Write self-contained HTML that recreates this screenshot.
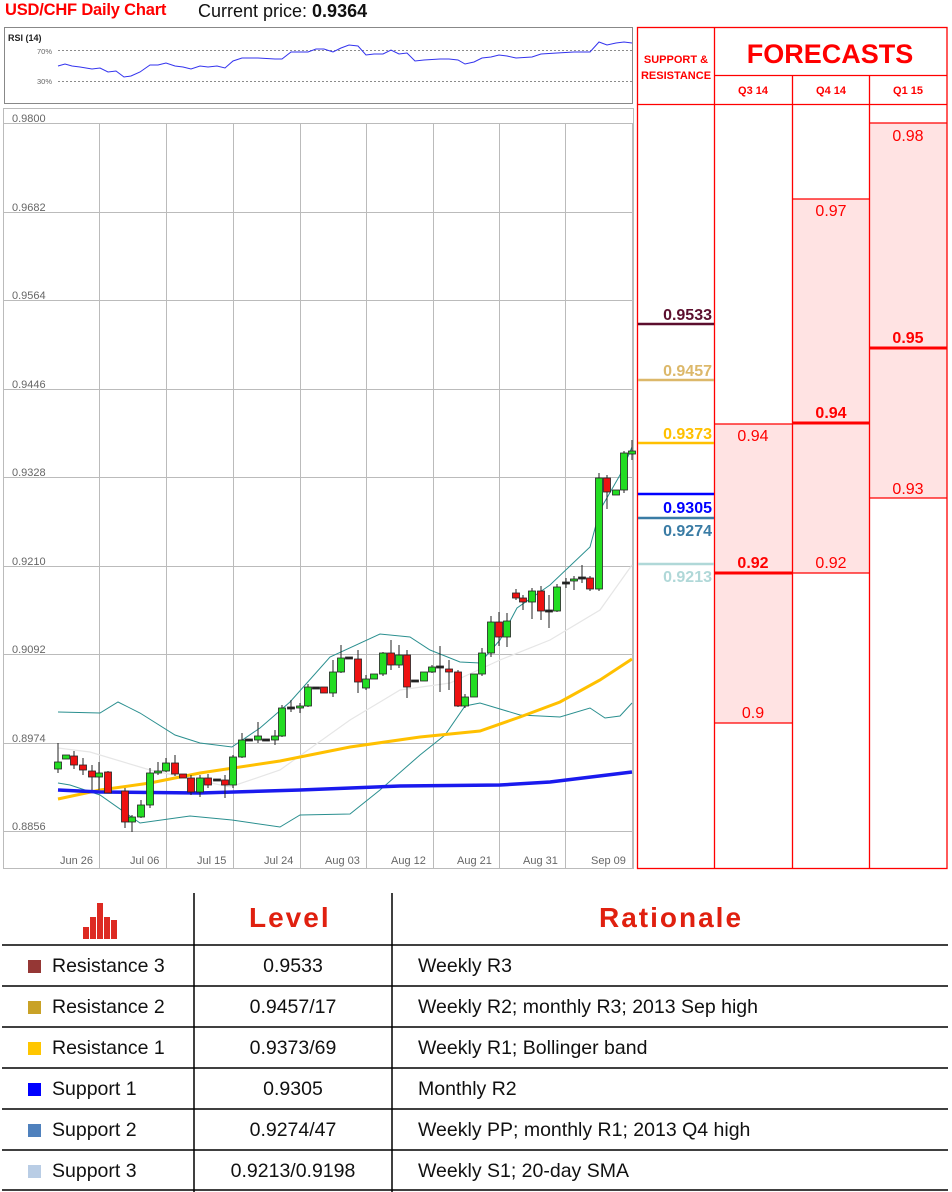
<!DOCTYPE html>
<html><head><meta charset="utf-8"><style>
*{margin:0;padding:0;box-sizing:border-box}
body{width:952px;height:1192px;background:#fff;position:relative;overflow:hidden;font-family:"Liberation Sans",sans-serif}
.a{position:absolute;white-space:nowrap}
.t{font-size:19.5px;color:#111}
.h{font-family:"Liberation Sans",sans-serif;font-weight:900;color:#e0200f;font-size:28px;letter-spacing:2px}
</style></head><body>
<div class="a" style="left:5px;top:1px;font-size:16.5px;font-weight:bold;color:#f00;letter-spacing:-0.2px">USD/CHF Daily Chart</div>
<div class="a" style="left:198px;top:1px;font-size:18px;color:#111">Current price: <b>0.9364</b></div>

<svg class="a" style="left:0;top:0" width="952" height="880" xmlns="http://www.w3.org/2000/svg">
<rect x="4.5" y="27.5" width="628" height="76" fill="#fff" stroke="#888"/>
<text x="8" y="41" font-size="9" font-weight="bold" font-family="Liberation Sans" fill="#222">RSI (14)</text>
<text x="37" y="54" font-size="7.5" font-family="Liberation Sans" fill="#666">70%</text>
<text x="37" y="84" font-size="7.5" font-family="Liberation Sans" fill="#666">30%</text>
<line x1="58" y1="50.5" x2="632" y2="50.5" stroke="#666" stroke-dasharray="2,2" stroke-width="0.8"/>
<line x1="58" y1="81.5" x2="632" y2="81.5" stroke="#666" stroke-dasharray="2,2" stroke-width="0.8"/>
<polyline fill="none" stroke="#3333ee" stroke-width="1" points="58,66 65,64 72,66 80,67 92,69 100,68 108,72 116,71 124,77 131,76 140,72 150,65 158,65 166,63 175,66 183,67 191,69 200,66 208,67 217,66 225,68 233,61 242,58 258,58 275,59 282,59 291,52 300,52 308,52 316,49 324,49 333,52 341,48 349,45 358,46 366,55 374,54 383,54 391,50 399,54 407,53 415,61 424,60 440,59 449,59 458,60 465,64 474,62 482,58 491,57 499,55 507,56 516,58 532,57 541,54 557,53 574,52 590,52 599,42 607,45 616,43 624,42 632,43"/>
<rect x="3.5" y="108.5" width="630" height="760" fill="#fff" stroke="#bbb"/>
<g stroke="#bbb" stroke-width="1">
<line x1="4" y1="123.5" x2="633" y2="123.5"/><line x1="4" y1="212.5" x2="633" y2="212.5"/><line x1="4" y1="300.5" x2="633" y2="300.5"/><line x1="4" y1="389.5" x2="633" y2="389.5"/><line x1="4" y1="477.5" x2="633" y2="477.5"/><line x1="4" y1="566.5" x2="633" y2="566.5"/><line x1="4" y1="654.5" x2="633" y2="654.5"/><line x1="4" y1="743.5" x2="633" y2="743.5"/><line x1="4" y1="831.5" x2="633" y2="831.5"/>
<line x1="99.5" y1="124" x2="99.5" y2="868"/><line x1="166.5" y1="124" x2="166.5" y2="868"/><line x1="233.5" y1="124" x2="233.5" y2="868"/><line x1="300.5" y1="124" x2="300.5" y2="868"/><line x1="366.5" y1="124" x2="366.5" y2="868"/><line x1="433.5" y1="124" x2="433.5" y2="868"/><line x1="499.5" y1="124" x2="499.5" y2="868"/><line x1="565.5" y1="124" x2="565.5" y2="868"/><line x1="632.5" y1="124" x2="632.5" y2="868"/>
</g>
<g font-family="Liberation Sans" font-size="11" fill="#666">
<text x="12" y="122">0.9800</text><text x="12" y="211">0.9682</text><text x="12" y="299">0.9564</text><text x="12" y="388">0.9446</text><text x="12" y="476">0.9328</text><text x="12" y="565">0.9210</text><text x="12" y="653">0.9092</text><text x="12" y="742">0.8974</text><text x="12" y="830">0.8856</text>
<text x="60" y="864">Jun 26</text><text x="130" y="864">Jul 06</text><text x="197" y="864">Jul 15</text><text x="264" y="864">Jul 24</text><text x="325" y="864">Aug 03</text><text x="391" y="864">Aug 12</text><text x="457" y="864">Aug 21</text><text x="523" y="864">Aug 31</text><text x="591" y="864">Sep 09</text>
</g>
<polyline fill="none" stroke="#e6e6e6" stroke-width="1.2" points="58,748 90,752 150,770 230,787 280,770 350,720 400,690 450,683 500,660 550,640 600,610 632,565"/>
<polyline fill="none" stroke="#2a8f8f" stroke-width="1" points="58,712 100,713 118,702 140,713 175,735 200,743 232,747 260,728 290,702 330,657 380,634 410,637 430,650 460,662 480,663 500,640 517,608 550,585 590,547 600,510 620,475 632,447"/>
<polyline fill="none" stroke="#2a8f8f" stroke-width="1" points="58,783 70,785 100,795 140,823 190,816 232,820 280,827 300,815 350,814 380,790 420,755 445,735 465,706 480,703 520,715 560,717 590,708 605,718 620,716 632,703"/>
<polyline fill="none" stroke="#ffc000" stroke-width="3" points="58,799 100,790 150,783 200,773 280,761 350,747 420,737 480,731 520,717 560,702 600,680 632,659"/>
<polyline fill="none" stroke="#1a1aee" stroke-width="3.5" points="58,790 100,792 200,793 300,790 400,786 500,785 550,782 632,772"/>
<g stroke="#222" stroke-width="1">
<line x1="58" y1="743" x2="58" y2="773"/><line x1="74" y1="751" x2="74" y2="769"/><line x1="83" y1="758" x2="83" y2="775"/><line x1="92" y1="765" x2="92" y2="790"/><line x1="99" y1="762" x2="99" y2="790"/><line x1="108" y1="771" x2="108" y2="793"/><line x1="125" y1="788" x2="125" y2="828"/><line x1="132" y1="815" x2="132" y2="832"/><line x1="141" y1="800" x2="141" y2="818"/><line x1="150" y1="768" x2="150" y2="808"/><line x1="158" y1="762" x2="158" y2="775"/><line x1="166" y1="758" x2="166" y2="772"/><line x1="175" y1="755" x2="175" y2="776"/><line x1="191" y1="775" x2="191" y2="795"/><line x1="200" y1="775" x2="200" y2="797"/><line x1="208" y1="774" x2="208" y2="788"/><line x1="225" y1="775" x2="225" y2="798"/><line x1="233" y1="755" x2="233" y2="788"/><line x1="242" y1="733" x2="242" y2="758"/><line x1="258" y1="722" x2="258" y2="743"/><line x1="275" y1="730" x2="275" y2="745"/><line x1="282" y1="705" x2="282" y2="737"/><line x1="291" y1="700" x2="291" y2="712"/><line x1="300" y1="703" x2="300" y2="713"/><line x1="308" y1="684" x2="308" y2="707"/><line x1="333" y1="660" x2="333" y2="697"/><line x1="341" y1="645" x2="341" y2="673"/><line x1="358" y1="650" x2="358" y2="693"/><line x1="366" y1="675" x2="366" y2="690"/><line x1="383" y1="652" x2="383" y2="676"/><line x1="391" y1="640" x2="391" y2="670"/><line x1="399" y1="645" x2="399" y2="668"/><line x1="407" y1="650" x2="407" y2="698"/><line x1="432" y1="665" x2="432" y2="673"/><line x1="440" y1="646" x2="440" y2="692"/><line x1="449" y1="660" x2="449" y2="690"/><line x1="458" y1="670" x2="458" y2="707"/><line x1="465" y1="694" x2="465" y2="708"/><line x1="482" y1="648" x2="482" y2="676"/><line x1="491" y1="616" x2="491" y2="657"/><line x1="499" y1="612" x2="499" y2="646"/><line x1="507" y1="613" x2="507" y2="647"/><line x1="516" y1="589" x2="516" y2="600"/><line x1="523" y1="595" x2="523" y2="610"/><line x1="532" y1="588" x2="532" y2="619"/><line x1="541" y1="586" x2="541" y2="620"/><line x1="549" y1="595" x2="549" y2="628"/><line x1="557" y1="584" x2="557" y2="612"/><line x1="566" y1="578" x2="566" y2="588"/><line x1="574" y1="576" x2="574" y2="590"/><line x1="582" y1="565" x2="582" y2="583"/><line x1="590" y1="576" x2="590" y2="591"/><line x1="599" y1="473" x2="599" y2="591"/><line x1="607" y1="475" x2="607" y2="509"/><line x1="624" y1="451" x2="624" y2="493"/><line x1="632" y1="440" x2="632" y2="460"/>
</g>
<g stroke="#222" stroke-width="0.8">
<rect x="54.5" y="762" width="7" height="7" fill="#22dd22"/><rect x="62.5" y="755" width="7" height="4" fill="#22dd22"/><rect x="70.5" y="756" width="7" height="9" fill="#ee1111"/><rect x="79.5" y="765" width="7" height="5" fill="#ee1111"/><rect x="88.5" y="771" width="7" height="6" fill="#ee1111"/><rect x="95.5" y="773" width="7" height="4" fill="#22dd22"/><rect x="104.5" y="772" width="7" height="21" fill="#ee1111"/><rect x="121.5" y="791" width="7" height="31" fill="#ee1111"/><rect x="128.5" y="817" width="7" height="5" fill="#22dd22"/><rect x="137.5" y="805" width="7" height="12" fill="#22dd22"/><rect x="146.5" y="773" width="7" height="32" fill="#22dd22"/><rect x="154.5" y="771" width="7" height="2" fill="#22dd22"/><rect x="162.5" y="763" width="7" height="8" fill="#22dd22"/><rect x="171.5" y="763" width="7" height="11" fill="#ee1111"/><rect x="179.5" y="774" width="7" height="4" fill="#ee1111"/><rect x="187.5" y="778" width="7" height="14" fill="#ee1111"/><rect x="196.5" y="778" width="7" height="14" fill="#22dd22"/><rect x="204.5" y="778" width="7" height="7" fill="#ee1111"/><rect x="213.5" y="779" width="7" height="2" fill="#222"/><rect x="221.5" y="780" width="7" height="5" fill="#ee1111"/><rect x="229.5" y="757" width="7" height="28" fill="#22dd22"/><rect x="238.5" y="740" width="7" height="17" fill="#22dd22"/><rect x="245.5" y="739" width="7" height="2" fill="#222"/><rect x="254.5" y="736" width="7" height="4" fill="#22dd22"/><rect x="262.5" y="739" width="7" height="2" fill="#222"/><rect x="271.5" y="736" width="7" height="4" fill="#22dd22"/><rect x="278.5" y="708" width="7" height="28" fill="#22dd22"/><rect x="287.5" y="707" width="7" height="2" fill="#222"/><rect x="296.5" y="706" width="7" height="2" fill="#22dd22"/><rect x="304.5" y="687" width="7" height="19" fill="#22dd22"/><rect x="312.5" y="687" width="7" height="2" fill="#222"/><rect x="320.5" y="687" width="7" height="6" fill="#ee1111"/><rect x="329.5" y="672" width="7" height="21" fill="#22dd22"/><rect x="337.5" y="658" width="7" height="14" fill="#22dd22"/><rect x="345.5" y="657" width="7" height="2" fill="#222"/><rect x="354.5" y="659" width="7" height="23" fill="#ee1111"/><rect x="362.5" y="679" width="7" height="9" fill="#22dd22"/><rect x="370.5" y="674" width="7" height="5" fill="#22dd22"/><rect x="379.5" y="653" width="7" height="21" fill="#22dd22"/><rect x="387.5" y="653" width="7" height="12" fill="#ee1111"/><rect x="395.5" y="655" width="7" height="10" fill="#22dd22"/><rect x="403.5" y="655" width="7" height="32" fill="#ee1111"/><rect x="411.5" y="680" width="7" height="2" fill="#222"/><rect x="420.5" y="672" width="7" height="9" fill="#22dd22"/><rect x="428.5" y="667" width="7" height="5" fill="#22dd22"/><rect x="436.5" y="666" width="7" height="2" fill="#222"/><rect x="445.5" y="669" width="7" height="3" fill="#ee1111"/><rect x="454.5" y="672" width="7" height="34" fill="#ee1111"/><rect x="461.5" y="697" width="7" height="9" fill="#22dd22"/><rect x="470.5" y="674" width="7" height="23" fill="#22dd22"/><rect x="478.5" y="653" width="7" height="21" fill="#22dd22"/><rect x="487.5" y="622" width="7" height="31" fill="#22dd22"/><rect x="495.5" y="622" width="7" height="15" fill="#ee1111"/><rect x="503.5" y="621" width="7" height="16" fill="#22dd22"/><rect x="512.5" y="593" width="7" height="5" fill="#ee1111"/><rect x="519.5" y="598" width="7" height="4" fill="#ee1111"/><rect x="528.5" y="591" width="7" height="11" fill="#22dd22"/><rect x="537.5" y="591" width="7" height="20" fill="#ee1111"/><rect x="545.5" y="610" width="7" height="2" fill="#222"/><rect x="553.5" y="587" width="7" height="24" fill="#22dd22"/><rect x="562.5" y="582" width="7" height="2" fill="#222"/><rect x="570.5" y="579" width="7" height="2" fill="#22dd22"/><rect x="578.5" y="577" width="7" height="2" fill="#222"/><rect x="586.5" y="578" width="7" height="11" fill="#ee1111"/><rect x="595.5" y="478" width="7" height="111" fill="#22dd22"/><rect x="603.5" y="478" width="7" height="14" fill="#ee1111"/><rect x="612.5" y="490" width="7" height="5" fill="#22dd22"/><rect x="620.5" y="453" width="7" height="37" fill="#22dd22"/><rect x="628.5" y="451" width="7" height="3" fill="#22dd22"/>
</g>
<g>
<rect x="714" y="424" width="78" height="299" fill="#ffe3e3"/>
<rect x="792" y="199" width="77" height="374" fill="#ffe3e3"/>
<rect x="869" y="123" width="78" height="375" fill="#ffe3e3"/>
</g>
<g stroke="#f00" stroke-width="1.3" fill="none">
<rect x="637.5" y="27.5" width="309.5" height="841"/>
<line x1="714.5" y1="27" x2="714.5" y2="868"/>
<line x1="792.5" y1="75" x2="792.5" y2="868"/>
<line x1="869.5" y1="75" x2="869.5" y2="868"/>
<line x1="714" y1="75.5" x2="947" y2="75.5"/>
<line x1="637" y1="104.5" x2="947" y2="104.5"/>
<line x1="714" y1="424" x2="792" y2="424"/><line x1="714" y1="723" x2="792" y2="723"/>
<line x1="792" y1="199" x2="869" y2="199"/><line x1="792" y1="573" x2="869" y2="573"/>
<line x1="869" y1="123" x2="947" y2="123"/><line x1="869" y1="498" x2="947" y2="498"/>
</g>
<g stroke="#f00" stroke-width="3">
<line x1="714" y1="573" x2="792" y2="573"/><line x1="792" y1="423" x2="869" y2="423"/><line x1="869" y1="348" x2="947" y2="348"/>
</g>
<g font-family="Liberation Sans" fill="#f00" text-anchor="middle">
<text x="830" y="63" font-size="27" font-weight="bold">FORECASTS</text>
<text x="676" y="63" font-size="11" font-weight="bold">SUPPORT &amp;</text>
<text x="676" y="79" font-size="11" font-weight="bold">RESISTANCE</text>
<text x="753" y="94" font-size="11" font-weight="bold">Q3 14</text>
<text x="831" y="94" font-size="11" font-weight="bold">Q4 14</text>
<text x="908" y="94" font-size="11" font-weight="bold">Q1 15</text>
<g font-size="16">
<text x="753" y="441">0.94</text><text x="753" y="568" font-weight="bold">0.92</text><text x="753" y="718">0.9</text>
<text x="831" y="216">0.97</text><text x="831" y="418" font-weight="bold">0.94</text><text x="831" y="568">0.92</text>
<text x="908" y="141">0.98</text><text x="908" y="343" font-weight="bold">0.95</text><text x="908" y="494">0.93</text>
</g>
</g>
<g stroke-width="2.5">
<line x1="638" y1="324" x2="714" y2="324" stroke="#5c0f2e"/>
<line x1="638" y1="380" x2="714" y2="380" stroke="#dcb86a"/>
<line x1="638" y1="443" x2="714" y2="443" stroke="#ffc000"/>
<line x1="638" y1="494" x2="714" y2="494" stroke="#0000ff"/>
<line x1="638" y1="518" x2="714" y2="518" stroke="#3a7ca5"/>
<line x1="638" y1="564" x2="714" y2="564" stroke="#b0d8d8"/>
</g>
<g font-family="Liberation Sans" font-size="16" font-weight="bold" text-anchor="end">
<text x="712" y="320" fill="#5c0f2e">0.9533</text>
<text x="712" y="376" fill="#dcb86a">0.9457</text>
<text x="712" y="439" fill="#ffc000">0.9373</text>
<text x="712" y="513" fill="#0000ff">0.9305</text>
<text x="712" y="536" fill="#3a7ca5">0.9274</text>
<text x="712" y="582" fill="#b0d8d8">0.9213</text>
</g>
</svg>

<svg class="a" style="left:0;top:880px" width="952" height="312">
<g fill="#dd2a22">
<rect x="83" y="47" width="6" height="12"/><rect x="90" y="37" width="6" height="22"/><rect x="97" y="23" width="6" height="36"/><rect x="104" y="37" width="6" height="22"/><rect x="111" y="40" width="6" height="19"/>
</g>
<g stroke="#000" stroke-width="1.5">
<line x1="194" y1="13" x2="194" y2="312"/><line x1="392" y1="13" x2="392" y2="312"/>
<line x1="2" y1="65" x2="948" y2="65"/><line x1="2" y1="106" x2="948" y2="106"/><line x1="2" y1="147" x2="948" y2="147"/><line x1="2" y1="188" x2="948" y2="188"/><line x1="2" y1="229" x2="948" y2="229"/><line x1="2" y1="270" x2="948" y2="270"/><line x1="2" y1="310" x2="948" y2="310"/>
</g>
<rect x="28" y="80" width="13" height="13" fill="#953735"/>
<rect x="28" y="121" width="13" height="13" fill="#c9a227"/>
<rect x="28" y="162" width="13" height="13" fill="#ffc600"/>
<rect x="28" y="203" width="13" height="13" fill="#0000ff"/>
<rect x="28" y="244" width="13" height="13" fill="#4f81bd"/>
<rect x="28" y="285" width="13" height="13" fill="#b9cde5"/>
</svg>
<div class="a h" style="left:249px;top:902px">Level</div>
<div class="a h" style="left:599px;top:902px">Rationale</div>
<div class="a t" style="left:52px;top:955px">Resistance 3</div>
<div class="a t" style="left:52px;top:996px">Resistance 2</div>
<div class="a t" style="left:52px;top:1037px">Resistance 1</div>
<div class="a t" style="left:52px;top:1078px">Support 1</div>
<div class="a t" style="left:52px;top:1119px">Support 2</div>
<div class="a t" style="left:52px;top:1160px">Support 3</div>
<div class="a t" style="left:194px;width:198px;text-align:center;top:955px">0.9533</div>
<div class="a t" style="left:194px;width:198px;text-align:center;top:996px">0.9457/17</div>
<div class="a t" style="left:194px;width:198px;text-align:center;top:1037px">0.9373/69</div>
<div class="a t" style="left:194px;width:198px;text-align:center;top:1078px">0.9305</div>
<div class="a t" style="left:194px;width:198px;text-align:center;top:1119px">0.9274/47</div>
<div class="a t" style="left:194px;width:198px;text-align:center;top:1160px">0.9213/0.9198</div>
<div class="a t" style="left:418px;top:955px">Weekly R3</div>
<div class="a t" style="left:418px;top:996px">Weekly R2; monthly R3; 2013 Sep high</div>
<div class="a t" style="left:418px;top:1037px">Weekly R1; Bollinger band</div>
<div class="a t" style="left:418px;top:1078px">Monthly R2</div>
<div class="a t" style="left:418px;top:1119px">Weekly PP; monthly R1; 2013 Q4 high</div>
<div class="a t" style="left:418px;top:1160px">Weekly S1; 20-day SMA</div>
</body></html>
